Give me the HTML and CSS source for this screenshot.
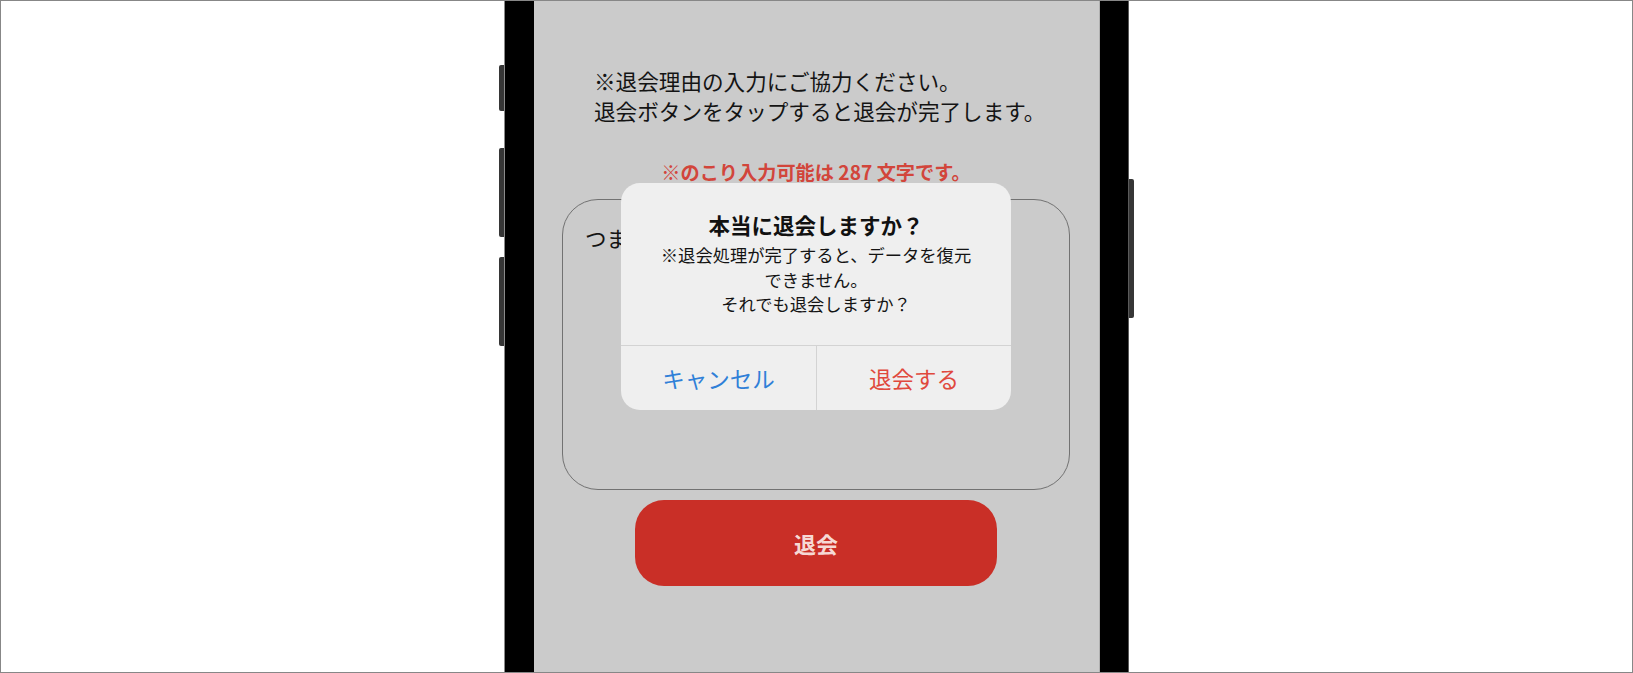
FILE: index.html
```html
<!DOCTYPE html>
<html lang="ja">
<head>
<meta charset="utf-8">
<title>退会</title>
<link rel="stylesheet" href="styles.css">
</head>
<body>
<div class="frame">
  <div class="phone">
    <span class="side side-l1"></span>
    <span class="side side-l2"></span>
    <span class="side side-l3"></span>
    <span class="side side-r1"></span>
    <div class="screen">
      <div class="content">
        <p class="note">※退会理由の入力にご協力ください。<br>退会ボタンをタップすると退会が完了します。</p>
        <p class="counter">※のこり入力可能は 287 文字です。</p>
        <div class="textarea">つま</div>
        <button class="withdraw" type="button">退会</button>
      </div>
      <div class="dialog" role="alertdialog">
        <div class="dialog-body">
          <p class="dialog-title">本当に退会しますか？</p>
          <p class="dialog-msg">※退会処理が完了すると、データを復元<br>できません。<br>それでも退会しますか？</p>
        </div>
        <div class="dialog-actions">
          <button class="act act-cancel" type="button">キャンセル</button>
          <button class="act act-ok" type="button">退会する</button>
        </div>
      </div>
    </div>
  </div>
</div>
</body>
</html>
```

FILE: styles.css
```css
html, body {
  margin: 0;
  height: 100%;
}

body {
  background: #ffffff;
  overflow: hidden;
  font-family: "Noto Sans CJK JP", "Noto Sans", sans-serif;
  color: #141414;
}

.frame {
  width: 1633px;
  height: 673px;
  box-sizing: border-box;
  border: 1px solid #878787;
  display: flex;
  justify-content: center;
  overflow: hidden;
}

.phone {
  position: relative;
  width: 625px;
  height: 100%;
  box-sizing: border-box;
  background: #000000;
  padding: 0 29px 0 30px;
  box-shadow: inset 1px 0 0 #8a8a8a, inset -1px 0 0 #5a5a5a;
}

.side {
  position: absolute;
  width: 5px;
  background: #363636;
}

.side-l1 { left: -5px; top: 64px; height: 46px; border-radius: 2px 0 0 2px; }
.side-l2 { left: -5px; top: 147px; height: 89px; border-radius: 2px 0 0 2px; }
.side-l3 { left: -5px; top: 256px; height: 89px; border-radius: 2px 0 0 2px; }
.side-r1 { right: -5px; top: 178px; height: 139px; border-radius: 0 2px 2px 0; }

.screen {
  position: relative;
  height: 100%;
  background: #cbcbcb;
  overflow: hidden;
  box-shadow: inset -1px 0 0 #b0b0b0;
}

.content {
  padding: 65px 30px 0 28px;
}

.note {
  margin: 0 0 0 32px;
  font-size: 21.6px;
  line-height: 30px;
  color: #141414;
}

.counter {
  margin: 33px 0 0;
  text-align: center;
  font-size: 19.2px;
  line-height: 26px;
  font-weight: 700;
  color: #d2453b;
}

.textarea {
  margin-top: 14px;
  height: 291px;
  box-sizing: border-box;
  border: 1.5px solid #727272;
  border-radius: 36px;
  padding: 23px 22px;
  font-size: 21.5px;
  line-height: 30px;
  color: #141414;
}

.withdraw {
  display: block;
  margin: 10px auto 0;
  width: 362px;
  height: 86px;
  border: none;
  border-radius: 29px;
  background: #c92f27;
  color: #f6d9d5;
  font-family: "Noto Sans CJK JP", "Noto Sans", sans-serif;
  font-size: 22px;
  font-weight: 700;
}

.dialog {
  position: absolute;
  left: 87px;
  top: 182px;
  width: 390px;
  background: #efefef;
  border-radius: 19px;
  overflow: hidden;
}

.dialog-body {
  padding: 28px 20px 28px;
  text-align: center;
}

.dialog-title {
  margin: 0;
  font-size: 21.5px;
  line-height: 28px;
  font-weight: 700;
  color: #111111;
}

.dialog-msg {
  margin: 4px 0 0;
  font-size: 17.3px;
  line-height: 24.5px;
  color: #141414;
}

.dialog-actions {
  display: grid;
  grid-template-columns: 1fr 1fr;
  height: 64px;
  border-top: 1px solid #d3d3d3;
}

.act {
  border: none;
  background: transparent;
  font-family: "Noto Sans CJK JP", "Noto Sans", sans-serif;
  font-size: 22.5px;
  padding: 0;
}

.act-cancel {
  color: #2f80d8;
}

.act-ok {
  color: #e0493d;
  border-left: 1px solid #d3d3d3;
}
```
